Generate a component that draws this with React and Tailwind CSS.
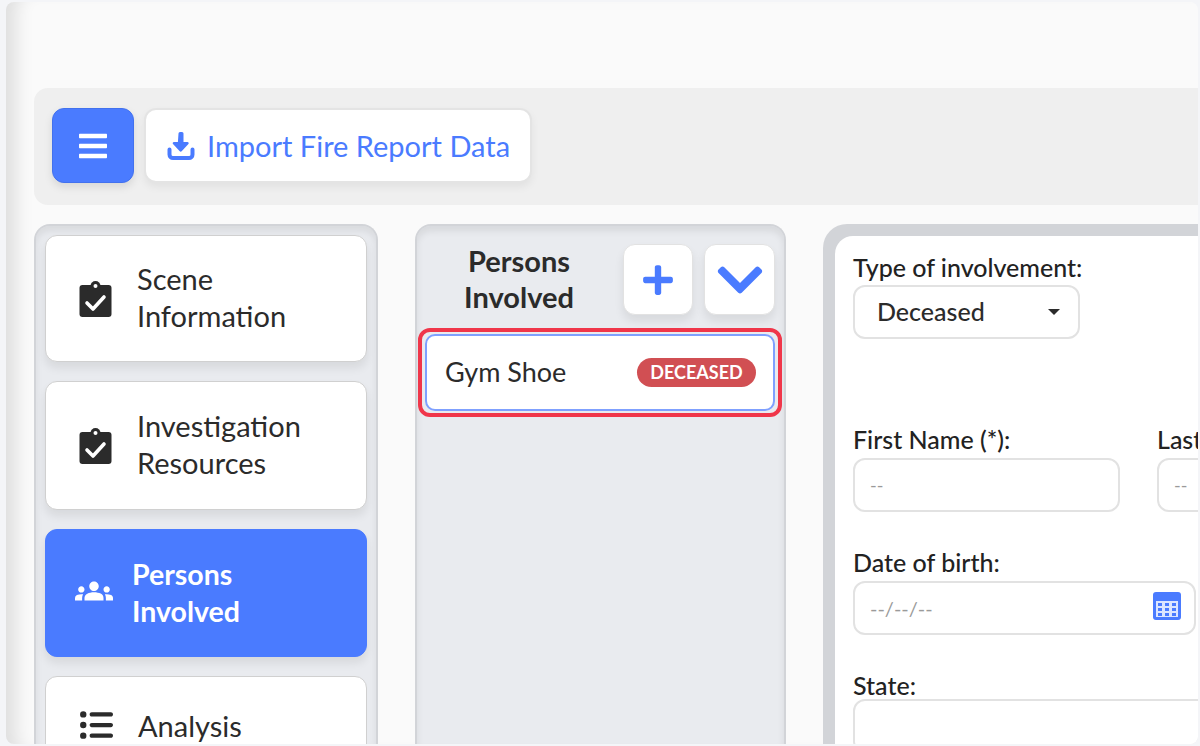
import React from "react";
import { FaListUl } from "react-icons/fa6";
import { FaBars, FaPlus, FaChevronDown } from "react-icons/fa";
import { MdGroups } from "react-icons/md";

const lato = "font-['Lato','Liberation_Sans',sans-serif]";

function ClipboardIcon() {
  return (
    <svg width="33" height="36" viewBox="0 0 33 36" className="shrink-0">
      <rect x="0.5" y="4" width="32" height="32" rx="3" fill="#2b2b2b" />
      <circle cx="16.5" cy="5" r="5" fill="#2b2b2b" />
      <circle cx="16.5" cy="5" r="2" fill="#fff" />
      <rect x="8" y="7" width="17" height="3" rx="1" fill="#2b2b2b" />
      <path d="M8 22 L14 28 L25 16" fill="none" stroke="#fff" strokeWidth="3.6" strokeLinecap="round" strokeLinejoin="round" />
    </svg>
  );
}

function DownloadIcon() {
  return (
    <svg width="28" height="28" viewBox="0 0 28 28" className="shrink-0" fill="#4a7bff">
      <path d="M11.5 1.5 a1.5 1.5 0 0 1 1.5 -1.5 h2 a1.5 1.5 0 0 1 1.5 1.5 V10 h4 a1.2 1.2 0 0 1 .9 2 l-6.5 7 a1.6 1.6 0 0 1 -2.4 0 l-6.5 -7 a1.2 1.2 0 0 1 .9 -2 h4 Z" />
      <path d="M2.5 17.5 v5 a3.5 3.5 0 0 0 3.5 3.5 h16 a3.5 3.5 0 0 0 3.5 -3.5 v-5" fill="none" stroke="#4a7bff" strokeWidth="4" strokeLinecap="round" />
    </svg>
  );
}

function NavCard({ icon, children, active, h, gap = "gap-[25px]", pl = "pl-[33px]" }) {
  return (
    <div
      className={`flex items-center shrink-0 ${h} ${pl} ${gap} rounded-[12px] border ${
        active
          ? "bg-[#4a7bff] border-[#4a7bff] text-white font-bold shadow-[0_6px_10px_rgba(0,0,0,0.08)]"
          : "bg-white border-[#d0d0d0] text-[#2b2b2b] shadow-[0_6px_10px_rgba(0,0,0,0.08)]"
      }`}
    >
      {icon}
      <div className={`${active ? "text-[28.5px] pb-[1px]" : "text-[29px] pb-[3px]"} leading-[37px]`}>{children}</div>
    </div>
  );
}

function Field({ label, className = "", children }) {
  return (
    <div className={className}>
      <div className="text-[25px] leading-[26px] font-medium text-[#222] whitespace-nowrap">{label}</div>
      {children}
    </div>
  );
}

function Box({ className = "", children }) {
  return (
    <div className={`h-[54px] mt-[6px] rounded-[12px] border-2 border-[#e2e2e2] bg-white flex items-center ${className}`}>
      {children}
    </div>
  );
}

function CalendarIcon() {
  return (
    <svg width="28" height="28" viewBox="0 0 28 28" className="shrink-0 -mt-[5px]">
      <rect width="28" height="28" rx="3" fill="#4a7bff" />
      <rect x="3" y="9" width="22" height="16" fill="#dbe5ff" />
      {[0, 1, 2].map((c) =>
        [0, 1, 2].map((r) => <rect key={`${c}${r}`} x={5 + c * 7} y={11 + r * 5} width="4" height="3" fill="#4a7bff" />)
      )}
    </svg>
  );
}

export default function App() {
  return (
    <div className={`${lato} w-[1200px] h-[746px] overflow-hidden bg-[#f4f5f8] pt-[2px] pl-[6px] pr-[2px] pb-[2px]`}>
      <div className="relative w-full h-full overflow-hidden rounded-[8px] bg-[#fafafa] pl-[28px] pt-[86px] flex flex-col shadow-[inset_24px_0_18px_-14px_rgba(0,0,0,0.11)]">
        <div className="h-[117px] shrink-0 -mr-[2px] pb-[2px] rounded-l-[14px] bg-[#efefef] flex items-center gap-[10px] pl-[18px]">
          <div className="w-[82px] h-[75px] rounded-[12px] bg-[#4a7bff] border border-[#4271ee] flex items-center justify-center text-white shadow-[0_4px_8px_rgba(0,0,0,0.1)]">
            <FaBars size={32} />
          </div>
          <div className="w-[388px] h-[75px] rounded-[12px] bg-white border-2 border-[#e4e4e4] flex items-center gap-[12px] pl-[21px] text-[#4a7bff] text-[29px] shadow-[0_4px_8px_rgba(0,0,0,0.06)]">
            <DownloadIcon />
            <span className="whitespace-nowrap">Import Fire Report Data</span>
          </div>
        </div>

        <div className="flex-1 mt-[19px] flex items-stretch gap-[37px] min-h-0">
          <div className="w-[344px] shrink-0 rounded-t-[16px] bg-[#e9ebef] border-2 border-b-0 border-[#d2d4d8] px-[9px] pt-[9px] flex flex-col gap-[19px] overflow-hidden shadow-[inset_0_5px_7px_rgba(0,0,0,0.07)]">
            <NavCard h="h-[127px]" icon={<ClipboardIcon />}>
              Scene<br />Information
            </NavCard>
            <NavCard h="h-[129px]" icon={<ClipboardIcon />}>
              Investigation<br />Resources
            </NavCard>
            <NavCard active h="h-[128px]" pl="pl-[29px]" gap="gap-[19px]" icon={<MdGroups size={38} className="shrink-0 -mt-[4px]" />}>
              Persons<br />Involved
            </NavCard>
            <div className="flex items-start shrink-0 h-[120px] pl-[33px] pt-[31px] gap-[25px] rounded-[12px] border border-[#d0d0d0] bg-white text-[#2b2b2b]">
              <FaListUl size={34} className="shrink-0" />
              <div className="text-[29px] leading-[37px] -mt-[1px]">Analysis</div>
            </div>
          </div>

          <div className="w-[371px] shrink-0 rounded-t-[16px] bg-[#e9ebef] border-2 border-b-0 border-[#d2d4d8] pl-[1px] pr-[2px] overflow-hidden shadow-[inset_0_5px_7px_rgba(0,0,0,0.08)]">
            <div className="h-[102px] flex items-start pt-[18px] pl-[3px]">
              <div className="w-[196px] mr-[6px] -mt-[1px] text-center font-bold text-[29px] leading-[36px] text-[#2b2b2b]">
                Persons<br />Involved
              </div>
              <div className="w-[70px] h-[71px] rounded-[12px] bg-white border border-[#e2e2e2] flex items-center justify-center text-[#4a7bff] shadow-[0_6px_10px_rgba(0,0,0,0.08)]">
                <FaPlus size={34} />
              </div>
              <div className="ml-[11px] w-[71px] h-[71px] rounded-[12px] bg-white border border-[#e2e2e2] flex items-center justify-center text-[#4a7bff] shadow-[0_6px_10px_rgba(0,0,0,0.08)]">
                <FaChevronDown size={52} />
              </div>
            </div>
            <div className="border-4 border-[#f0364a] rounded-[12px] px-[3px] py-[2px]">
              <div className="h-[77px] rounded-[10px] border-2 border-[#7fa0ff] bg-white flex items-center justify-between pl-[18px] pr-[17px]">
                <span className="text-[27px] text-[#2b2b2b]">Gym Shoe</span>
                <span className="w-[119px] h-[29px] rounded-full bg-[#d14f53] text-white text-[18px] font-bold flex items-center justify-center">
                  DECEASED
                </span>
              </div>
            </div>
          </div>

          <div className="flex-1 min-w-0 rounded-tl-[24px] bg-[#d2d4d8] pl-[12px] pt-[12px] -mr-[2px] overflow-hidden">
            <div className="h-full rounded-tl-[18px] bg-white pl-[18px] pt-[18px] overflow-hidden">
              <Field label="Type of involvement:">
                <Box className="w-[227px] !mt-[5px] pl-[22px] pr-[18px] justify-between">
                  <span className="text-[25px] font-medium text-[#2b2b2b]">Deceased</span>
                  <span className="w-0 h-0 border-x-[6px] border-x-transparent border-t-[6px] border-t-[#2b2b2b]" />
                </Box>
              </Field>
              <div className="mt-[87px] flex gap-[37px] w-[600px]">
                <Field label="First Name (*):" className="w-[267px]">
                  <Box className="pl-[15px]"><span className="text-[18px] text-[#9a9a9a]">--</span></Box>
                </Field>
                <Field label="Last Name (*):" className="w-[267px]">
                  <Box className="pl-[15px]"><span className="text-[18px] text-[#9a9a9a]">--</span></Box>
                </Field>
              </div>
              <Field label="Date of birth:" className="mt-[37px] w-[343px]">
                <Box className="pl-[15px] pr-[13px] justify-between">
                  <span className="text-[20px] text-[#9a9a9a]">--/--/--</span>
                  <CalendarIcon />
                </Box>
              </Field>
              <Field label="State:" className="mt-[37px] w-[600px]">
                <Box className="!mt-[1px]" />
              </Field>
            </div>
          </div>
        </div>
      </div>
    </div>
  );
}
